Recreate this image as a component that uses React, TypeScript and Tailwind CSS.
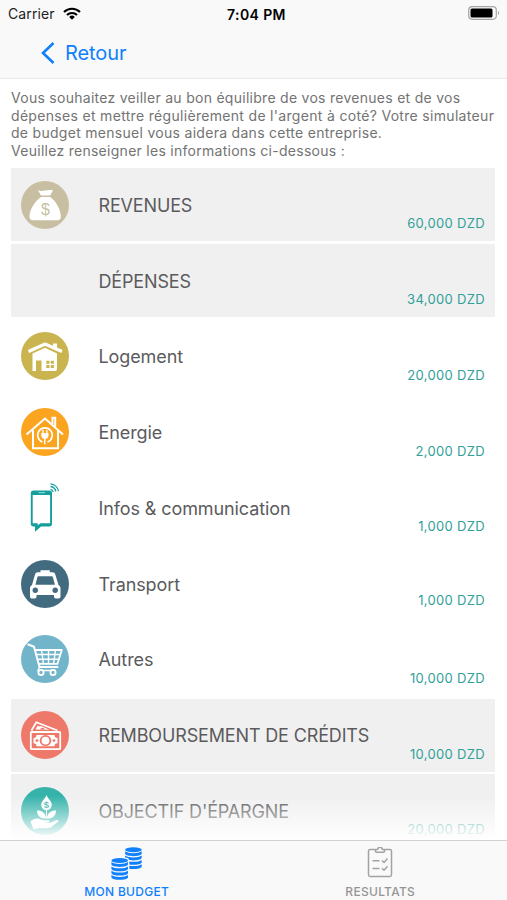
import React from 'react';
import clsx from 'clsx';

type RowItem = {
  label: string;
  amount: string;
  icon?: React.FC;
  section?: boolean;
  amountClass?: string;
};

const Disc: React.FC<{ color: string; children: React.ReactNode }> = ({ color, children }) => (
  <svg viewBox="0 0 48 48" className="h-12 w-12" fill="none">
    <circle cx="24" cy="24" r="24" fill={color} />
    {children}
  </svg>
);

const BagIcon = () => (
  <Disc color="#c8bfa3">
    <path d="M17 9.300c2.500 1 4.500.8 7 .3s5.500-.8 8-.3l-2.800 5.200H20z" fill="#fff" />
    <path d="M20 16h9.200C35 20 40 29 39.800 36c-.2 2.300-1.300 3.200-3.800 3.200H12.500c-2.500 0-3.800-.9-4-3.200C8 29 14 20 20 16z" fill="#fff" />
    <text x="24.500" y="33.500" textAnchor="middle" fontSize="16" fill="#c8bfa3" className="font-['Liberation_Sans']">$</text>
  </Disc>
);

const HouseIcon = () => (
  <Disc color="#c9b450">
    <path d="M7.500 19.500 24 12l17 7.500" stroke="#fff" strokeWidth="3.200" strokeLinejoin="round" />
    <path d="M32 11.500h4v5h-4z" fill="#fff" />
    <path d="M11.500 21.500 24 15.800 36 21.500V37a2 2 0 0 1-2 2H20.500V28.500H15V39h-3.500z" fill="#fff" />
    <path d="M25.300 28.800h3.200v3h-3.200zM29.700 28.800h3.200v3h-3.200zM25.300 33h3.200v3h-3.200zM29.700 33h3.200v3h-3.200z" fill="#c9b450" />
  </Disc>
);

const EnergyIcon = () => (
  <Disc color="#fba41f">
    <path d="M5.500 26.500 24 10.500l18 16M31.500 16V9.800h2.700v9" stroke="#fff" strokeWidth="2" />
    <path d="M12 22v18.300h25V22" stroke="#fff" strokeWidth="2" />
    <path d="M21.500 34a7.300 7.300 0 1 1 5 0" stroke="#fff" strokeWidth="1.600" />
    <path d="M20.300 25h7.200v2.500c0 2-1.500 3.300-3 3.300v5.500h-1.400v-5.500c-1.500 0-2.800-1.300-2.800-3.300z" fill="#fff" />
    <path d="M22 22v3M25.800 22v3" stroke="#fff" strokeWidth="1.300" />
  </Disc>
);

const PhoneIcon = () => (
  <svg viewBox="0 0 48 48" className="h-12 w-12 overflow-visible" fill="none">
    <path
      d="M12.500 6.500h15.800a2.700 2.700 0 0 1 2.700 2.700v30.500a2.700 2.700 0 0 1-2.700 2.700H20L14 47.800V42.400h-1.500a2.700 2.700 0 0 1-2.700-2.700V9.200a2.700 2.700 0 0 1 2.700-2.700zM11.700 10.900V39.300h5v2l2.800-2h9.600V10.900z"
      fill="#139f9c"
      fillRule="evenodd"
    />
    <path d="M17.500 8.700h6.500" stroke="#9fdad8" strokeWidth="1" />
    <path d="M29.500 5.300a3.500 3.500 0 0 1 2.700 2.500M29.500 2.500a6 6 0 0 1 5.300 5M29.500-.2a9 9 0 0 1 8 7.400" stroke="#139f9c" strokeWidth="1.300" />
  </svg>
);

const TaxiIcon = () => (
  <Disc color="#426b80">
    <path
      d="M19.500 12.300v-2h9.300v2h2.700c1.500 0 2.300.8 2.800 2.200L37.500 25c1.500.8 2 2 2 3.500v8.200a1.800 1.800 0 0 1-1.800 1.800h-2.900a1.800 1.800 0 0 1-1.800-1.800V35H15.500v1.700a1.800 1.800 0 0 1-1.800 1.800h-3A1.800 1.800 0 0 1 9 36.700v-8.200c0-1.500.5-2.700 2-3.500l3-10.500c.5-1.400 1.300-2.200 2.800-2.200z"
      fill="#fff"
    />
    <path d="M17.500 16.300h13.300c.6 0 .9.300 1.100.9l2 7.500H14.400l2-7.500c.2-.6.500-.9 1.100-.9z" fill="#426b80" />
    <circle cx="14.300" cy="30.300" r="2.700" fill="#426b80" />
    <circle cx="34.200" cy="30.300" r="2.700" fill="#426b80" />
  </Disc>
);

const CartIcon = () => (
  <Disc color="#72b5cb">
    <path d="M7.300 9.500 13 11.800 18.500 32h18" stroke="#fff" strokeWidth="2" strokeLinecap="round" strokeLinejoin="round" />
    <path d="M14.500 15h26.300L36.500 28.800H18" stroke="#fff" strokeWidth="1.800" strokeLinejoin="round" />
    <path d="M15.500 19.500h23.800M16.700 24.200H38M20.500 15l2 14M27.500 15v14M34.500 15l-2 14" stroke="#fff" strokeWidth="1.400" />
    <path d="M18.500 32 17 35.500h18" stroke="#fff" strokeWidth="1.400" />
    <circle cx="20" cy="37.500" r="2.600" fill="#72b5cb" stroke="#fff" strokeWidth="1.800" />
    <circle cx="32" cy="37.500" r="2.600" fill="#72b5cb" stroke="#fff" strokeWidth="1.800" />
  </Disc>
);

const CashIcon = () => (
  <Disc color="#ee796b">
    <path d="m10.500 19.500 4.800-8.300 21.200 8.300" stroke="#fff" strokeWidth="1.700" strokeLinejoin="round" />
    <path d="m14.500 18.500 2.300-4c.8 1 2 1.300 3 .6l8.700 3.600z" fill="#fff" />
    <path d="M19 18.500a2.700 2.700 0 0 1 5 0z" fill="#ee796b" />
    <rect x="9.800" y="21" width="29.400" height="17.200" rx="1" stroke="#fff" strokeWidth="1.800" />
    <path d="M15.500 24h18a3 3 0 0 0 3 3v5.200a3 3 0 0 0-3 3h-18a3 3 0 0 0-3-3V27a3 3 0 0 0 3-3z" fill="#fff" />
    <ellipse cx="24.500" cy="29.600" rx="5.800" ry="5.500" fill="#ee796b" />
    <circle cx="24.500" cy="29.600" r="3.900" fill="#fff" />
    <circle cx="16" cy="29.600" r="1.400" fill="#ee796b" />
    <circle cx="33" cy="29.600" r="1.400" fill="#ee796b" />
  </Disc>
);

const SavingsIcon = () => (
  <Disc color="#35b3ab">
    <path d="M25.500 8c1.500 4 5.300 6.300 5.300 9.800a5.300 5.300 0 0 1-10.600 0C20.200 14.300 24 12 25.500 8z" fill="#fff" />
    <text x="25.500" y="20.800" textAnchor="middle" fontSize="9.500" fontWeight="bold" fill="#35b3ab" className="font-['Liberation_Sans']">$</text>
    <path d="M25.500 23v8.500" stroke="#fff" strokeWidth="1" />
    <path d="M16 23.500c5 0 8.500 2.500 9 8-5.500.3-9-2.500-9-8zM35 23.500c-5 0-8.500 2.500-9 8 5.500.3 9-2.500 9-8z" fill="#fff" />
    <path d="M9.500 34.500c3-2.700 6-3.500 9-2.500l4 1.200h4.500c2 0 2 2.200 0 2.300h-4l5.500.5 7-3c1.800-.5 2.600.8 1.300 2L30 40.300c-1.500.8-3 .9-5 .9h-7.500l-5 1z" fill="#fff" />
  </Disc>
);

const CoinStack: React.FC<{ x: number; y: number }> = ({ x, y }) => (
  <g transform={`translate(${x} ${y})`} fill="#1180fb">
    <ellipse cx="8.700" cy="2.800" rx="8.300" ry="2.500" />
    {[0, 1, 2, 3].map(i => (
      <path key={i} transform={`translate(0 ${i * 4.3})`} d="M.4 4.300c3 2.500 13.600 2.500 16.600 0v2.500c-1 3.100-15.600 3.100-16.600 0z" />
    ))}
  </g>
);

const CoinsIcon = () => (
  <svg viewBox="0 0 32 34" className="-mb-[2px] h-[34px] w-8">
    <CoinStack x={13.700} y={0} />
    <rect x="-1" y="10.500" width="19.300" height="24" rx="4" fill="#f9f9f9" />
    <CoinStack x={0} y={10.800} />
  </svg>
);

const ClipboardIcon = () => (
  <svg viewBox="0 0 26 32" className="h-8 w-[26px]" fill="none" stroke="#a3a3a3" strokeWidth="1.500" strokeLinejoin="round">
    <path d="M8 2.500H3.200a1.700 1.700 0 0 0-1.700 1.700v23.600a1.700 1.700 0 0 0 1.700 1.700h19.600a1.700 1.700 0 0 0 1.700-1.700V4.200a1.700 1.700 0 0 0-1.700-1.700H18" />
    <path d="M8.500 2.500h2.200a2.300 2.300 0 0 1 4.600 0h2.200v1.700a1 1 0 0 1-1 1h-7a1 1 0 0 1-1-1z" />
    <path d="M5.500 13.700h7M5.500 21.500h7M15 13.500l2 2 3.500-4M15 21.300l2 2 3.500-4" />
  </svg>
);

const WifiIcon = () => (
  <svg viewBox="0 0 18 13" className="-mt-[2px] h-[13px] w-[18px]" fill="none" stroke="#000" strokeWidth="2.200">
    <path d="M1 5a11.500 11.500 0 0 1 16 0M4 8a7.200 7.200 0 0 1 10 0" />
    <path d="M6.200 9.900a4 4 0 0 1 5.600 0L9 12.700z" fill="#000" stroke="none" />
  </svg>
);

const ROWS: RowItem[] = [
  { label: 'REVENUES', amount: '60,000 DZD', icon: BagIcon, section: true },
  { label: 'DÉPENSES', amount: '34,000 DZD', section: true },
  { label: 'Logement', amount: '20,000 DZD', icon: HouseIcon },
  { label: 'Energie', amount: '2,000 DZD', icon: EnergyIcon },
  { label: 'Infos & communication', amount: '1,000 DZD', icon: PhoneIcon },
  { label: 'Transport', amount: '1,000 DZD', icon: TaxiIcon, amountClass: 'bottom-[12px]' },
  { label: 'Autres', amount: '10,000 DZD', icon: CartIcon },
  { label: 'REMBOURSEMENT DE CRÉDITS', amount: '10,000 DZD', icon: CashIcon, section: true },
  { label: "OBJECTIF D'ÉPARGNE", amount: '20,000 DZD', icon: SavingsIcon, section: true },
];

const INTRO = [
  { text: 'Vous souhaitez veiller au bon équilibre de vos revenues et de vos', tracking: 'tracking-[0.275px]' },
  { text: "dépenses et mettre régulièrement de l'argent à coté? Votre simulateur", tracking: 'tracking-[0.315px]' },
  { text: 'de budget mensuel vous aidera dans cette entreprise.', tracking: 'tracking-[0.29px]' },
  { text: 'Veuillez renseigner les informations ci-dessous :', tracking: 'tracking-[0.275px]' },
];

const BudgetRow: React.FC<{ item: RowItem }> = ({ item }) => {
  const Icon = item.icon;
  return (
    <li className={clsx('relative flex h-[73px] shrink-0 items-center pl-[10px]', item.section && 'bg-[#f0f0f0]')}>
      <div className="h-12 w-[77.500px]">{Icon && <Icon />}</div>
      <span
        className={clsx(
          'whitespace-nowrap pt-[2px] text-[18px] leading-6 text-[#5b5b5d]',
          item.section ? 'tracking-[-0.15px]' : 'tracking-[-0.1px]'
        )}
      >
        {item.label}
      </span>
      <span className={clsx('absolute right-[10px] text-[13px] leading-4 tracking-[0.33px] text-[#31a099]', item.amountClass ?? 'bottom-[10px]')}>
        {item.amount}
      </span>
    </li>
  );
};

export default function App() {
  return (
    <div className="flex h-[900px] w-full flex-col overflow-hidden bg-white font-[Inter,sans-serif]">
      <header className="h-[79px] shrink-0 border-b border-[#e9e9e9] bg-[#f9f9f9]">
        <div className="grid h-7 grid-cols-3 items-center pl-2 pr-[7px] text-black">
          <div className="flex items-center gap-2">
            <span className="text-[14px] leading-7 tracking-[0.1px] text-[#222]">Carrier</span>
            <WifiIcon />
          </div>
          <span className="pl-[5px] text-center text-[14px] font-semibold tracking-[0.4px]">7:04 PM</span>
          <svg viewBox="0 0 32 14" className="-mt-[2px] h-[14px] w-8 justify-self-end" fill="none">
            <rect x=".7" y=".7" width="27.600" height="12.600" rx="3.500" stroke="#a5a5a5" strokeWidth="1.200" />
            <rect x="2.500" y="2.500" width="22" height="9" rx="1.500" fill="#000" />
            <path d="M30 5v4c1.500-.5 1.500-3.500 0-4z" fill="#a5a5a5" />
          </svg>
        </div>
        <a href="#" className="ml-[41px] mt-[12px] flex w-fit items-center gap-[10px] text-[#0f80fa]">
          <svg viewBox="0 0 14 22" className="h-[22px] w-[14px]" fill="none" stroke="currentColor" strokeWidth="2.600">
            <path d="M12.500 1 2 11l10.500 10" />
          </svg>
          <span className="pt-px text-[20px] leading-6 tracking-[-0.1px]">Retour</span>
        </a>
      </header>

      <main className="relative min-h-0 flex-1 overflow-hidden">
        <div className="px-[11px] pt-[10.300px] text-[14px] leading-[17.400px] text-[#737373]">
          {INTRO.map(line => (
            <p key={line.text} className={clsx('whitespace-nowrap', line.tracking)}>{line.text}</p>
          ))}
        </div>
        <ul className="ml-[11px] mr-[12px] mt-[9.400px] flex flex-col gap-[2.750px]">
          {ROWS.map(item => <BudgetRow key={item.label} item={item} />)}
        </ul>
        <div className="pointer-events-none absolute inset-x-0 bottom-0 h-[44px] bg-gradient-to-b from-white/0 to-white" />
      </main>

      <nav className="grid h-[60px] shrink-0 grid-cols-2 border-t border-[#d2d2d2] bg-[#f9f9f9] pt-[6px] text-[12px] font-medium">
        <div className="flex flex-col items-center text-[#1180fb]">
          <CoinsIcon />
          <span className="mt-[5px] leading-4 tracking-[0.3px]">MON BUDGET</span>
        </div>
        <div className="flex flex-col items-center text-[#959595]">
          <ClipboardIcon />
          <span className="mt-[5px] leading-4 tracking-[0.3px]">RESULTATS</span>
        </div>
      </nav>
    </div>
  );
}
